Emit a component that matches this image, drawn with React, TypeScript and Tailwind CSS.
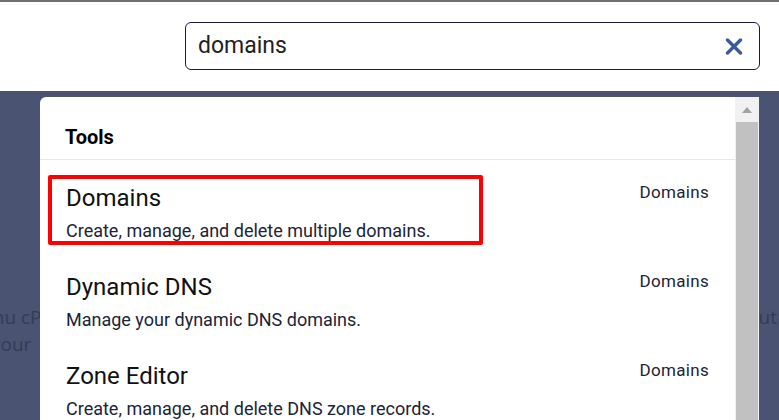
import React from 'react';

const results = [
  { title: 'Domains', desc: 'Create, manage, and delete multiple domains.', group: 'Domains', marked: true },
  { title: 'Dynamic DNS', desc: 'Manage your dynamic DNS domains.', group: 'Domains', marked: false },
  { title: 'Zone Editor', desc: 'Create, manage, and delete DNS zone records.', group: 'Domains', marked: false },
];

const ClearIcon: React.FC = () => (
  <svg width="18" height="17" viewBox="0 0 18 17" className="shrink-0">
    <path d="M2.5 2 L15.5 15 M15.5 2 L2.5 15" stroke="#3b5a9a" strokeWidth="3.4" strokeLinecap="round" fill="none" />
  </svg>
);

export default function App() {
  return (
    <div className="w-[779px] h-[420px] overflow-hidden bg-[#4a5371] font-['Roboto',_'Liberation_Sans',_sans-serif]">
      {/* search header */}
      <div className="h-[91px] bg-white border-t-2 border-[#6f6f6f] pt-[20px] pl-[185px] pr-[19px]">
        <div className="h-[48px] flex items-center justify-between border border-[#1b1a3c] rounded-md pl-[12px] pr-[16px]">
          <span className="text-[23px] leading-[26px] text-[#222]">domains</span>
          <ClearIcon />
        </div>
      </div>

      {/* page content under the results menu */}
      <div className="relative h-[329px]">
        <div className="pt-[213px] font-['Open_Sans',_sans-serif] text-[19px] leading-[27px] text-[#333c57] whitespace-nowrap">
          <div className="flex justify-between">
            <span className="-ml-[35px]">Menu cPanel tools</span>
            <span className="pr-[2px]">about</span>
          </div>
          <div className="-ml-[9px]">your</div>
        </div>

        {/* results dropdown */}
        <div className="absolute left-[40px] top-[6px] w-[719px] h-[340px] flex bg-white rounded-tl-md overflow-hidden">
          <div className="flex-1">
            <div className="h-[63px] pt-[28px] pl-[25px] border-b border-[#e6e8eb]">
              <div className="text-[20px] leading-[24px] font-bold text-black">Tools</div>
            </div>
            {results.map((r) => (
              <div key={r.title} className="flex justify-between pl-[8px] pr-[26px] pt-[15px] pb-[4px]">
                <div
                  className={
                    'w-[435px] border-4 rounded-[2px] pl-[14px] pt-[5px] ' +
                    (r.marked ? 'border-[#ff0000]' : 'border-transparent')
                  }
                >
                  <div className="text-[24px] leading-[28px] text-[#111]">{r.title}</div>
                  <div className="mt-[8px] text-[18px] leading-[21px] text-[#1c2438] whitespace-nowrap">{r.desc}</div>
                </div>
                <div className="mt-[7px] text-[17px] leading-[20px] tracking-[0.3px] text-[#1c2438]">{r.group}</div>
              </div>
            ))}
          </div>
          <div className="w-[24px] flex flex-col bg-[#f1f1f1]">
            <div className="h-[25px] flex items-center justify-center">
              <svg width="10" height="6" viewBox="0 0 10 6">
                <path d="M0 6 L5 0 L10 6 Z" fill="#a3a3a3" />
              </svg>
            </div>
            <div className="flex-1 mx-[1px] bg-[#c1c1c1]" />
          </div>
        </div>
      </div>
    </div>
  );
}
